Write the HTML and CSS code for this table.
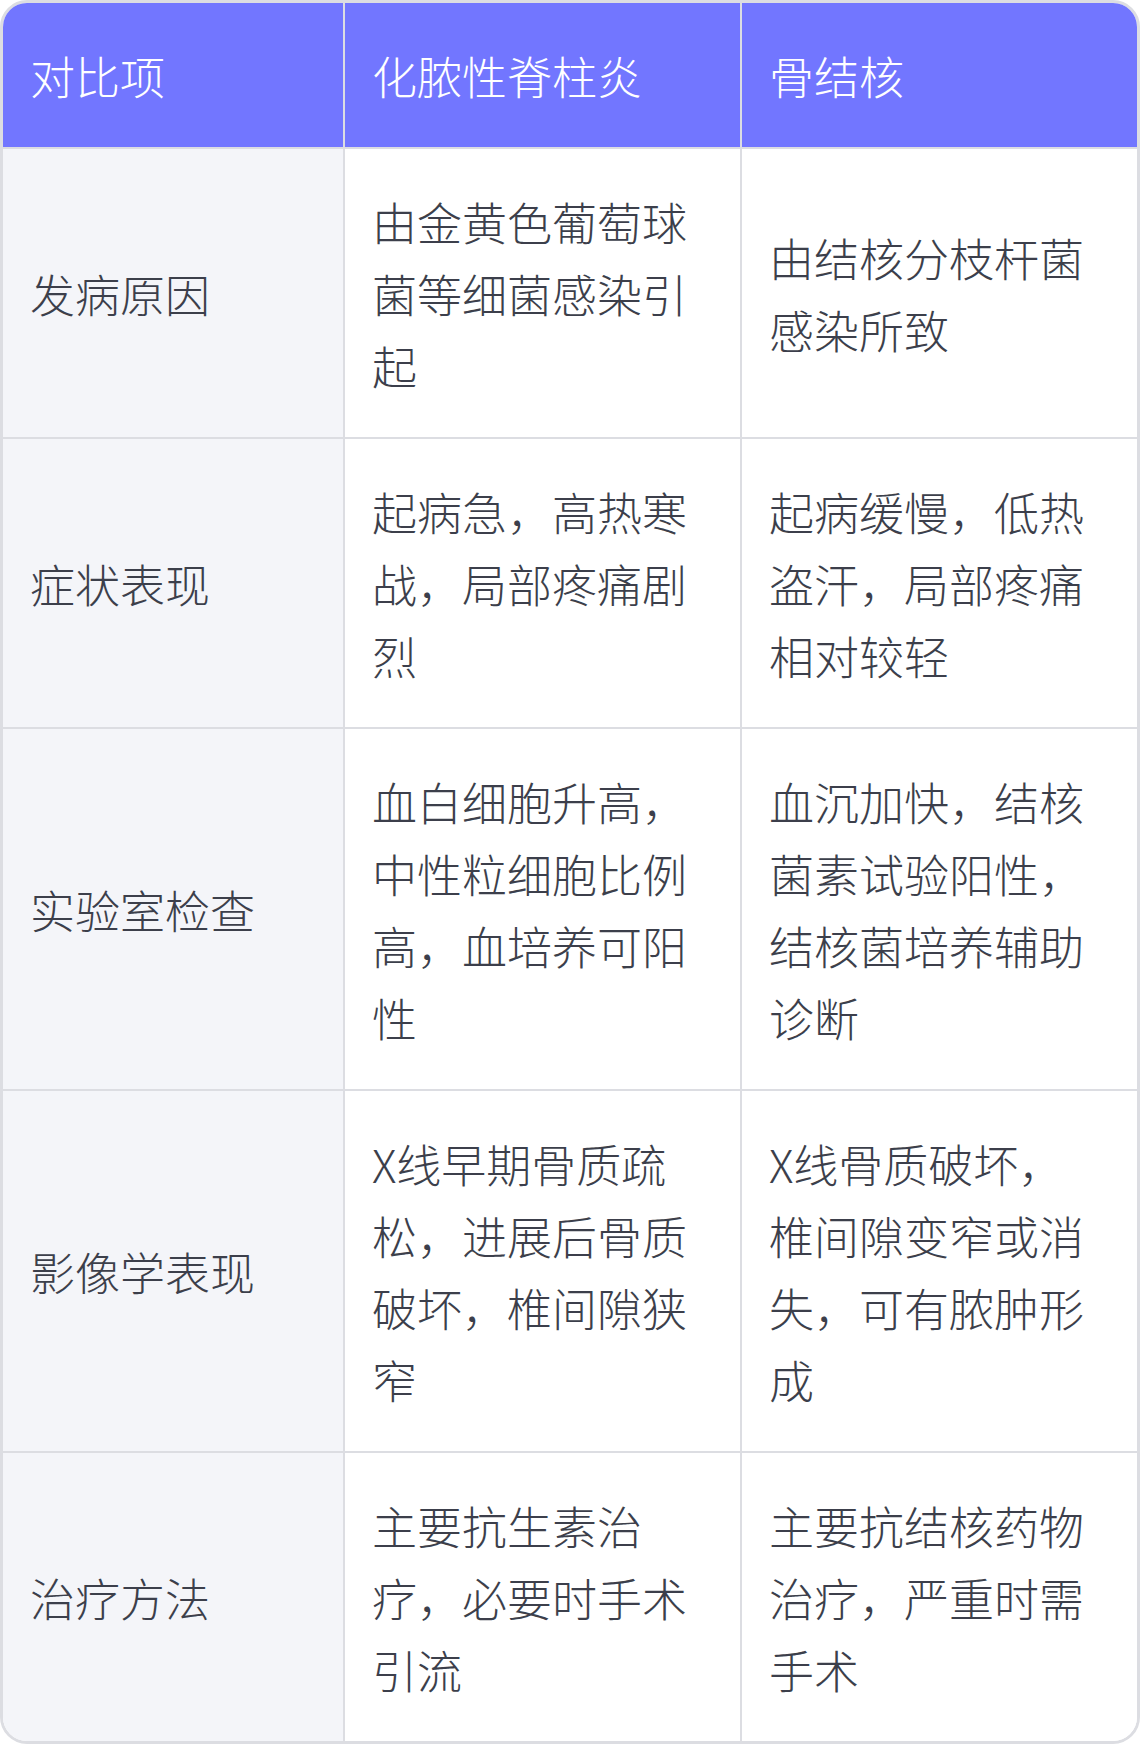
FILE: index.html
```html
<!DOCTYPE html>
<html lang="zh-CN">
<head>
<meta charset="utf-8">
<title>化脓性脊柱炎与骨结核对比</title>
<link rel="stylesheet" href="styles.css">
</head>
<body>
<div class="table">
  <div class="cell head c1">对比项</div>
  <div class="cell head c2">化脓性脊柱炎</div>
  <div class="cell head c3">骨结核</div>

  <div class="cell label c1">发病原因</div>
  <div class="cell c2">由金黄色葡萄球菌等细菌感染引起</div>
  <div class="cell c3">由结核分枝杆菌感染所致</div>

  <div class="cell label c1">症状表现</div>
  <div class="cell c2">起病急，高热寒战，局部疼痛剧烈</div>
  <div class="cell c3">起病缓慢，低热盗汗，局部疼痛相对较轻</div>

  <div class="cell label c1">实验室检查</div>
  <div class="cell c2">血白细胞升高，中性粒细胞比例高，血培养可阳性</div>
  <div class="cell c3">血沉加快，结核菌素试验阳性，结核菌培养辅助诊断</div>

  <div class="cell label c1">影像学表现</div>
  <div class="cell c2">X线早期骨质疏松，进展后骨质破坏，椎间隙狭窄</div>
  <div class="cell c3">X线骨质破坏，椎间隙变窄或消失，可有脓肿形成</div>

  <div class="cell label c1 last">治疗方法</div>
  <div class="cell c2 last">主要抗生素治疗，必要时手术引流</div>
  <div class="cell c3 last">主要抗结核药物治疗，严重时需手术</div>
</div>
</body>
</html>
```

FILE: styles.css
```css
html, body {
  margin: 0;
  padding: 0;
  background: #ffffff;
}

.table {
  width: 1140px;
  box-sizing: border-box;
  border: 3px solid #dcdde2;
  border-radius: 27px;
  overflow: hidden;
  display: grid;
  grid-template-columns: 342px 397px 395px;
  font-family: "Noto Sans CJK SC", "Noto Sans", sans-serif;
  font-weight: 300;
  font-size: 45px;
  line-height: 72px;
  color: #3c3f4b;
}

.cell {
  box-sizing: border-box;
  padding: 37px 29px 35px 27px;
  display: flex;
  align-items: center;
  border-bottom: 2px solid #dcdde2;
  background: #ffffff;
}

.c1, .c2 {
  border-right: 2px solid #dcdde2;
}

.head {
  background: #7276ff;
  color: #ffffff;
}

.label {
  background: #f4f5f9;
}

.last {
  border-bottom: none;
}
```
